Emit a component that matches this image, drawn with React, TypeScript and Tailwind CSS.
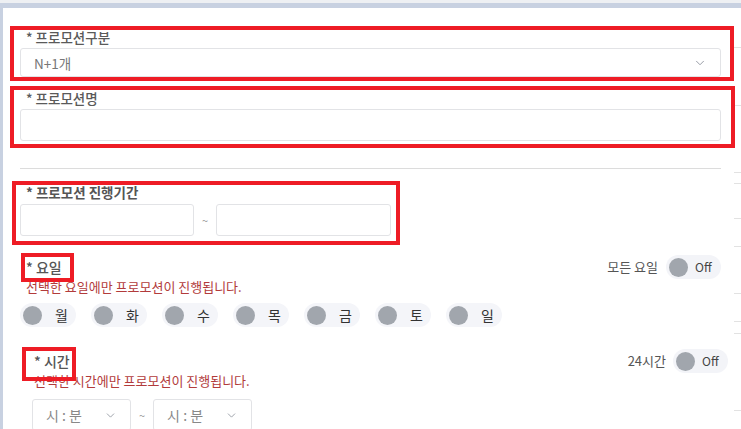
import { ChevronDown } from "lucide-react";

const DAYS = ["월", "화", "수", "목", "금", "토", "일"];

function Toggle() {
  return (
    <div className="flex items-center gap-[7px] h-[24px] w-[55px] rounded-full bg-[#f3f4f8] pl-[3px]">
      <span className="w-[19px] h-[19px] rounded-full bg-[#a1a6ad]" />
      <span className="text-[12px] text-[#444]">Off</span>
    </div>
  );
}

function DayPill({ label }: { label: string }) {
  return (
    <div className="flex items-center gap-[13px] h-[24px] w-[56px] rounded-full bg-[#f4f5f9] pl-[3px]">
      <span className="w-[19px] h-[19px] rounded-full bg-[#a1a6ad]" />
      <span className="text-[14px] text-[#333]">{label}</span>
    </div>
  );
}

function TimeSelect() {
  return (
    <div className="flex items-center justify-between w-[99px] h-[32px] border border-[#e2e3e6] rounded-[3px] pl-[13px] pr-[13px] text-[14px] text-[#888]">
      <span>시 : 분</span>
      <ChevronDown size={13} strokeWidth={1.5} className="text-[#8a8f99]" />
    </div>
  );
}

export default function App() {
  return (
    <div
      className="relative w-[741px] h-[429px] overflow-hidden bg-[#c8d1e1]"
      style={{ fontFamily: '"Noto Sans CJK KR", "Noto Sans", sans-serif' }}
    >
      <div className="h-[3px] bg-[#eef0f3]" />
      <div className="ml-[3px] mt-[5px] h-[421px] bg-white pl-[17px] pr-[20px] pt-[20px] leading-[18px]">
        {/* 프로모션구분 */}
        <div className="pl-[6px] text-[13.5px] text-[#5a5a5a] font-medium">* 프로모션구분</div>
        <div className="mt-[2px] flex items-center justify-between h-[29px] border border-[#e2e3e6] rounded-[3px] pl-[13px] pr-[13px] text-[13.5px] text-[#777]">
          <span>N+1개</span>
          <ChevronDown size={14} strokeWidth={1.5} className="text-[#8a8f99]" />
        </div>

        {/* 프로모션명 */}
        <div className="mt-[12px] pl-[6px] text-[13.5px] text-[#5a5a5a] font-medium">* 프로모션명</div>
        <div className="mt-[2px] h-[32px] border border-[#e2e3e6] rounded-[3px]" />

        <div className="mt-[27px] border-t border-[#dcdcdc]" />

        {/* 진행기간 */}
        <div className="mt-[14px] pl-[6px] text-[13.5px] text-[#555] font-semibold">* 프로모션 진행기간</div>
        <div className="mt-[3px] flex items-center gap-[8px]">
          <div className="w-[174px] h-[32px] border border-[#e2e3e6] rounded-[3px]" />
          <span className="text-[11px] text-[#999]">~</span>
          <div className="w-[175px] h-[32px] border border-[#e2e3e6] rounded-[3px]" />
        </div>

        {/* 요일 */}
        <div className="mt-[19px] flex items-center justify-between">
          <div className="pl-[6px] text-[14px] text-[#555] font-medium">* 요일</div>
          <div className="flex items-center gap-[8px]">
            <span className="text-[13px] text-[#555]">모든 요일</span>
            <Toggle />
          </div>
        </div>
        <div className="pl-[6px] mt-[-1px] text-[13px] text-[#b23b3b]">선택한 요일에만 프로모션이 진행됩니다.</div>
        <div className="mt-[7px] flex gap-[15px]">
          {DAYS.map((d) => (
            <DayPill key={d} label={d} />
          ))}
        </div>

        {/* 시간 */}
        <div className="mt-[22px] flex items-center justify-between mr-[-7px]">
          <div className="pl-[14px] text-[14px] text-[#555] font-medium">* 시간</div>
          <div className="flex items-center gap-[7px]">
            <span className="text-[13px] text-[#555]">24시간</span>
            <Toggle />
          </div>
        </div>
        <div className="pl-[14px] mt-[-1px] text-[13px] text-[#b23b3b]">선택한 시간에만 프로모션이 진행됩니다.</div>
        <div className="mt-[9px] ml-[12px] flex items-center gap-[8px]">
          <TimeSelect />
          <span className="text-[11px] text-[#999]">~</span>
          <TimeSelect />
        </div>
      </div>

      {/* faint lines from the page behind, right edge */}
      {[47, 105, 172, 183, 218, 246, 293, 321, 333, 410].map((y) => (
        <div key={y} className="absolute right-0 w-[7px] h-px bg-[#e2e2e2]" style={{ top: y }} />
      ))}

      {/* annotation boxes */}
      <div className="absolute left-[10px] top-[26px] w-[724px] h-[55px] border-4 border-[#ee1c25]" />
      <div className="absolute left-[10px] top-[86px] w-[725px] h-[62px] border-4 border-[#ee1c25]" />
      <div className="absolute left-[12px] top-[181px] w-[388px] h-[64px] border-4 border-[#ee1c25]" />
      <div className="absolute left-[21px] top-[253px] w-[53px] h-[29px] border-4 border-[#ee1c25]" />
      <div className="absolute left-[22px] top-[347px] w-[54px] h-[34px] border-4 border-[#ee1c25]" />
    </div>
  );
}
